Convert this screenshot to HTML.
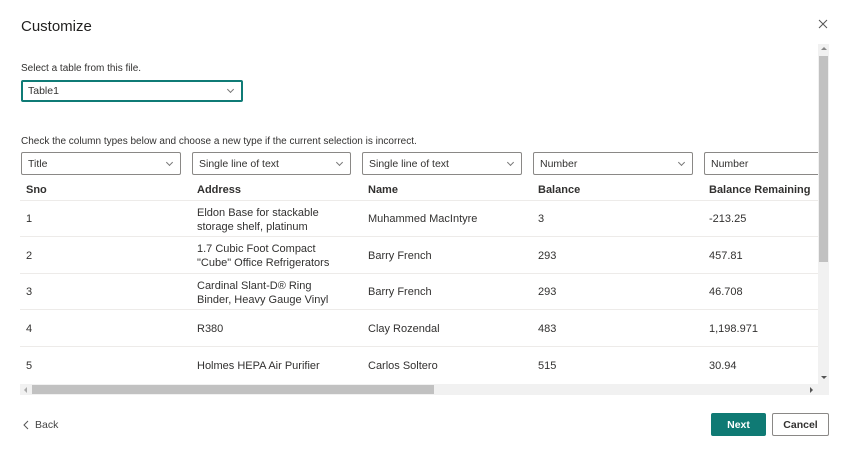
<!DOCTYPE html>
<html><head><meta charset="utf-8"><style>
*{box-sizing:border-box;margin:0;padding:0}
body{width:850px;height:457px;background:#fff;font-family:"Liberation Sans",sans-serif;color:#323130;position:relative;overflow:hidden;font-size:11px}
.a{position:absolute;white-space:nowrap}
.dd{position:absolute;height:23px;border:1px solid #8a8886;border-radius:2px;padding-left:6px;line-height:22px;font-size:10.5px;color:#323130;top:152px}
.chev{position:absolute;right:8px;top:7px;width:5px;height:5px;border-right:1px solid #777;border-bottom:1px solid #777;transform:rotate(45deg)}
.hd{font-weight:bold;font-size:11px;top:184px}
.sep{position:absolute;left:20px;width:798px;height:1px;background:#edebe9}
.c{position:absolute;font-size:11px;line-height:14px}
</style></head><body>
<div class="a" style="left:21px;top:18px;font-size:15px;color:#201f1e">Customize</div>
<svg class="a" style="left:818px;top:19px" width="10" height="10"><path d="M1 1L9 9M9 1L1 9" stroke="#555" stroke-width="1"/></svg>
<div class="a" style="left:21px;top:63px;font-size:10px">Select a table from this file.</div>
<div class="a" style="left:21px;top:80px;width:222px;height:22px;border:2px solid #0f7b76;border-radius:2px;padding-left:5px;line-height:19px;font-size:10.5px">Table1<span class="chev" style="top:5px"></span></div>
<div class="a" style="left:21px;top:136px;font-size:10px">Check the column types below and choose a new type if the current selection is incorrect.</div>
<div class="dd" style="left:21px;width:160px">Title<span class="chev"></span></div>
<div class="dd" style="left:192px;width:159px">Single line of text<span class="chev"></span></div>
<div class="dd" style="left:362px;width:160px">Single line of text<span class="chev"></span></div>
<div class="dd" style="left:533px;width:160px">Number<span class="chev"></span></div>
<div class="dd" style="left:704px;width:114px;border-right:none;border-radius:2px 0 0 2px">Number</div>
<div class="a hd" style="left:26px">Sno</div>
<div class="a hd" style="left:197px">Address</div>
<div class="a hd" style="left:368px">Name</div>
<div class="a hd" style="left:538px">Balance</div>
<div class="a hd" style="left:709px">Balance Remaining</div>
<div class="sep" style="top:200px"></div>
<div class="sep" style="top:236px"></div>
<div class="sep" style="top:273px"></div>
<div class="sep" style="top:309px"></div>
<div class="sep" style="top:346px"></div>

<div class="c" style="left:26px;top:212px">1</div>
<div class="c" style="left:197px;top:206px">Eldon Base for stackable<br>storage shelf, platinum</div>
<div class="c" style="left:368px;top:212px">Muhammed MacIntyre</div>
<div class="c" style="left:538px;top:212px">3</div>
<div class="c" style="left:709px;top:212px">-213.25</div>

<div class="c" style="left:26px;top:249px">2</div>
<div class="c" style="left:197px;top:242px">1.7 Cubic Foot Compact<br>"Cube" Office Refrigerators</div>
<div class="c" style="left:368px;top:249px">Barry French</div>
<div class="c" style="left:538px;top:249px">293</div>
<div class="c" style="left:709px;top:249px">457.81</div>

<div class="c" style="left:26px;top:285px">3</div>
<div class="c" style="left:197px;top:279px">Cardinal Slant-D® Ring<br>Binder, Heavy Gauge Vinyl</div>
<div class="c" style="left:368px;top:285px">Barry French</div>
<div class="c" style="left:538px;top:285px">293</div>
<div class="c" style="left:709px;top:285px">46.708</div>

<div class="c" style="left:26px;top:322px">4</div>
<div class="c" style="left:197px;top:322px">R380</div>
<div class="c" style="left:368px;top:322px">Clay Rozendal</div>
<div class="c" style="left:538px;top:322px">483</div>
<div class="c" style="left:709px;top:322px">1,198.971</div>

<div class="c" style="left:26px;top:359px">5</div>
<div class="c" style="left:197px;top:359px">Holmes HEPA Air Purifier</div>
<div class="c" style="left:368px;top:359px">Carlos Soltero</div>
<div class="c" style="left:538px;top:359px">515</div>
<div class="c" style="left:709px;top:359px">30.94</div>

<div class="a" style="left:818px;top:44px;width:11px;height:340px;background:#f1f1f1"></div>
<div class="a" style="left:819px;top:56px;width:9px;height:206px;background:#c1c1c1"></div>
<div class="a" style="left:821px;top:47px;width:0;height:0;border-left:3px solid transparent;border-right:3px solid transparent;border-bottom:3px solid #888"></div>
<div class="a" style="left:821px;top:376px;width:0;height:0;border-left:3px solid transparent;border-right:3px solid transparent;border-top:3px solid #555"></div>
<div class="a" style="left:20px;top:384px;width:809px;height:11px;background:#f1f1f1"></div>
<div class="a" style="left:32px;top:385px;width:402px;height:9px;background:#c1c1c1"></div>
<div class="a" style="left:24px;top:387px;width:0;height:0;border-top:3px solid transparent;border-bottom:3px solid transparent;border-right:3px solid #aaa"></div>
<div class="a" style="left:810px;top:387px;width:0;height:0;border-top:3px solid transparent;border-bottom:3px solid transparent;border-left:3px solid #555"></div>

<svg class="a" style="left:23px;top:420px" width="6" height="10"><path d="M5 1L1 5L5 9" stroke="#555" fill="none"/></svg>
<div class="a" style="left:35px;top:419px;font-size:10.5px;color:#444">Back</div>
<div class="a" style="left:711px;top:413px;width:55px;height:23px;background:#0f7a74;border-radius:2px;color:#fff;font-weight:bold;font-size:10.5px;text-align:center;line-height:24px">Next</div>
<div class="a" style="left:772px;top:413px;width:57px;height:23px;border:1px solid #8a8886;border-radius:2px;font-weight:bold;font-size:10.5px;text-align:center;line-height:22px">Cancel</div>
</body></html>
